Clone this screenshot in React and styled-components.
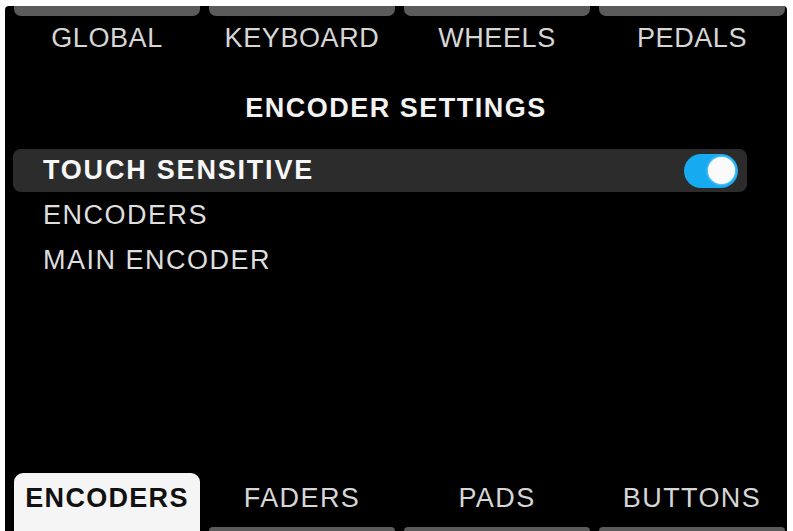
import React from 'react';
import styled, { createGlobalStyle } from 'styled-components';

const GlobalStyle = createGlobalStyle`
  html, body {
    margin: 0;
    padding: 0;
    background: #fff;
  }
  body {
    font-family: "Liberation Sans", Arial, sans-serif;
  }
`;

const Frame = styled.div`
  width: 793px;
  height: 531px;
  padding: 6px 6px 0 5px;
  box-sizing: border-box;
  background: #fff;
  overflow: hidden;
`;

const Screen = styled.div`
  height: 100%;
  background: #000;
  border-radius: 4px 4px 0 0;
  display: flex;
  flex-direction: column;
  overflow: hidden;
`;

const TabGrid = styled.div`
  display: grid;
  grid-template-columns: repeat(4, 186px);
  column-gap: 9px;
  padding-left: 9px;
  align-items: end;
`;

const TopTab = styled.div`
  height: 10px;
  background: #5b5b5b;
  border-radius: 0 0 7px 7px;
`;

const TopLabel = styled.div`
  text-align: center;
  color: #d6d6d6;
  font-size: 27px;
  letter-spacing: 0.6px;
  line-height: 44px;
  height: 44px;
`;

const Title = styled.div`
  text-align: center;
  color: #f2f2f2;
  font-weight: 700;
  font-size: 27px;
  line-height: 30px;
  margin-top: 33px;
  letter-spacing: 1.5px;
`;

const List = styled.div`
  display: flex;
  flex-direction: column;
  gap: 2px;
  margin: 26px 0 0 8px;
  width: 734px;
`;

const Row = styled.div`
  height: 43px;
  display: flex;
  align-items: center;
  justify-content: space-between;
  padding: 0 9px 0 30px;
  border-radius: 8px;
  background: ${(p) => (p.$selected ? '#2b2c2b' : 'transparent')};
  color: ${(p) => (p.$selected ? '#f7f7f7' : '#dedede')};
  font-weight: ${(p) => (p.$selected ? 700 : 400)};
  letter-spacing: ${(p) => (p.$selected ? '1.8px' : '1.5px')};
  font-size: 27px;
`;

const Toggle = styled.div`
  width: 54px;
  height: 34px;
  border-radius: 17px;
  background: #16aaf0;
  display: flex;
  align-items: center;
  justify-content: flex-end;
  padding: 0 3px;
  box-sizing: border-box;
`;

const Knob = styled.div`
  width: 27px;
  height: 27px;
  border-radius: 50%;
  background: #fafafa;
  box-shadow: 0 0 3px rgba(255, 255, 255, 0.8);
`;

const Spacer = styled.div`
  flex: 1;
`;

const BottomTab = styled.div`
  position: relative;
  height: 58px;
  border-radius: 9px 9px 0 0;
  background: ${(p) => (p.$active ? '#f5f5f5' : 'transparent')};
  color: ${(p) => (p.$active ? '#111' : '#d6d6d6')};
  font-weight: ${(p) => (p.$active ? 700 : 400)};
  letter-spacing: ${(p) => (p.$active ? '1.3px' : '1.4px')};
  font-size: 27px;
  text-align: center;
  line-height: 50px;

  &::after {
    content: '';
    display: ${(p) => (p.$active ? 'none' : 'block')};
    position: absolute;
    left: 0;
    right: 0;
    bottom: 0;
    height: 4px;
    border-radius: 6px 6px 0 0;
    background: #5b5b5b;
  }
`;

const topTabs = ['GLOBAL', 'KEYBOARD', 'WHEELS', 'PEDALS'];
const items = [
  { label: 'TOUCH SENSITIVE', selected: true, toggle: true },
  { label: 'ENCODERS' },
  { label: 'MAIN ENCODER' },
];
const bottomTabs = ['ENCODERS', 'FADERS', 'PADS', 'BUTTONS'];

export default function App() {
  return (
    <>
      <GlobalStyle />
      <Frame>
        <Screen>
          <TabGrid>
            {topTabs.map((t) => (
              <TopTab key={t} />
            ))}
          </TabGrid>
          <TabGrid>
            {topTabs.map((t) => (
              <TopLabel key={t}>{t}</TopLabel>
            ))}
          </TabGrid>
          <Title>ENCODER SETTINGS</Title>
          <List>
            {items.map((it) => (
              <Row key={it.label} $selected={it.selected}>
                <span>{it.label}</span>
                {it.toggle && (
                  <Toggle>
                    <Knob />
                  </Toggle>
                )}
              </Row>
            ))}
          </List>
          <Spacer />
          <TabGrid>
            {bottomTabs.map((t, i) => (
              <BottomTab key={t} $active={i === 0}>
                {t}
              </BottomTab>
            ))}
          </TabGrid>
        </Screen>
      </Frame>
    </>
  );
}
